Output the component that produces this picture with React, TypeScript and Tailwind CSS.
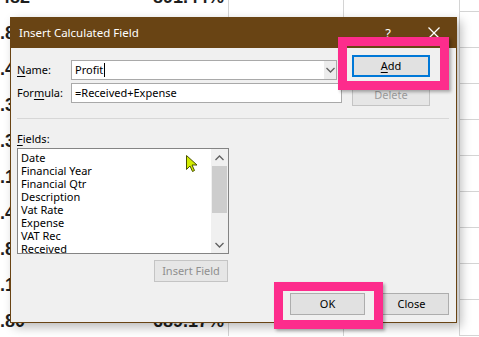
import React from "react";

const rows = [
  { a: "0.482", b: "891.44%", w: "w-[30px]" },
  { a: "0.83", b: "688.21%", w: "w-[25px]" },
  { a: "0.44", b: "790.12%", w: "w-[25px]" },
  { a: "0.35", b: "587.45%", w: "w-[25px]" },
  { a: "0.31", b: "686.92%", w: "w-[25px]" },
  { a: "1.17", b: "789.63%", w: "w-[25px]" },
  { a: "0.42", b: "891.08%", w: "w-[25px]" },
  { a: "0.84", b: "588.77%", w: "w-[25px]" },
  { a: "1.12", b: "690.55%", w: "w-[25px]" },
  { a: "0.80", b: "689.17%", w: "w-[25px]" },
];

const fields = [
  "Date",
  "Financial Year",
  "Financial Qtr",
  "Description",
  "Vat Rate",
  "Expense",
  "VAT Rec",
  "Received",
];

function Chevron({ up }: { up?: boolean }) {
  return (
    <svg width="9" height="6" viewBox="0 0 9 6" className="block">
      {up ? (
        <polyline points="0.5,5 4.5,1 8.5,5" fill="none" stroke="#606060" strokeWidth="1.3" />
      ) : (
        <polyline points="0.5,1 4.5,5 8.5,1" fill="none" stroke="#606060" strokeWidth="1.3" />
      )}
    </svg>
  );
}

export default function App() {
  return (
    <div className="relative w-[479px] h-[337px] overflow-hidden bg-white">
      {/* spreadsheet behind */}
      <div className="-mt-[24px] flex flex-col font-['Liberation_Sans',Arial,sans-serif] font-bold text-[18px] text-[#1e1e1e]">
        {rows.map((r, i) => (
          <div key={i} className="flex h-[36px]">
            <div className="w-[228px] flex items-end pb-[6px]">
              <div className={`${r.w} shrink-0 flex justify-end whitespace-nowrap leading-none`}>
                <span>{r.a}</span>
              </div>
              <div className="flex-1 flex justify-end pr-[4px] whitespace-nowrap leading-none">
                <span>{r.b}</span>
              </div>
            </div>
            <div className="w-[115px] border-l border-[#d4d4d4]" />
            <div className="w-[116px] border-l border-[#d4d4d4]" />
            <div className="flex-1 border-l border-b border-[#d4d4d4]" />
          </div>
        ))}
      </div>

      {/* dialog */}
      <div className="absolute left-[10px] top-[17px] w-[447px] h-[306px] flex flex-col bg-[#f0f0f0] border border-[#694414] shadow-[4px_4px_10px_rgba(0,0,0,0.28)] font-['Noto_Sans',sans-serif] text-[11px] text-black">
        <div className="h-[30px] shrink-0 bg-[#694414] flex items-center pl-[8px] text-white">
          <span className="text-[11.5px] leading-none">Insert Calculated Field</span>
          <span className="ml-auto mr-[37px] text-[13px] leading-none">?</span>
          <svg width="12" height="12" viewBox="0 0 12 12" className="mr-[16px]">
            <line x1="0.5" y1="0.5" x2="11.5" y2="11.5" stroke="white" strokeWidth="1.2" />
            <line x1="11.5" y1="0.5" x2="0.5" y2="11.5" stroke="white" strokeWidth="1.2" />
          </svg>
        </div>

        <div className="flex-1 flex flex-col">
          {/* top section */}
          <div className="flex">
            <div className="flex flex-col pt-[12px] gap-[3px] pl-[6px]">
              <div className="flex items-center h-[20px]">
                <span className="w-[54px]">
                  <span className="underline underline-offset-2">N</span>ame:
                </span>
                <div className="w-[266px] h-[20px] flex border border-[#a9a9a9] bg-white">
                  <div className="flex-1 flex items-center pl-[3px]">
                    <span>Profit</span>
                    <span className="w-px h-[14px] bg-black ml-[1px]" />
                  </div>
                  <div className="w-[12px] flex items-center justify-center bg-[#ececec]">
                    <Chevron />
                  </div>
                </div>
              </div>
              <div className="flex items-center h-[20px]">
                <span className="w-[54px]">
                  For<span className="underline underline-offset-2">m</span>ula:
                </span>
                <div className="w-[271px] h-[20px] flex items-center border border-[#a9a9a9] bg-white pl-[3px]">
                  =Received+Expense
                </div>
              </div>
            </div>
            <div className="ml-auto flex flex-col pt-[7px] gap-[7px] pr-[26px]">
              <button className="w-[78px] h-[22px] bg-[#e1e1e1] border-2 border-[#0078d7] flex items-center justify-center">
                <span>
                  <span className="underline underline-offset-2">A</span>dd
                </span>
              </button>
              <button className="w-[78px] h-[22px] bg-[#e6e6e6] border border-[#c4c4c4] text-[#9c9c9c] flex items-center justify-center">
                Delete
              </button>
            </div>
          </div>

          <div className="mt-[12px] ml-[6px] mr-[7px] h-px bg-[#d7d7d7]" />

          <div className="mt-[12px] ml-[6px] leading-[16px]">
            <span className="underline underline-offset-2">F</span>ields:
          </div>

          <div className="ml-[6px] mt-[1px] w-[212px] flex flex-col items-end">
            <div className="w-[212px] h-[106px] flex border border-[#848484] bg-white">
              <div className="flex-1 flex flex-col pl-[3px] pt-[2px] leading-[13px] overflow-hidden">
                {fields.map((f) => (
                  <div key={f} className="h-[13px] whitespace-nowrap">{f}</div>
                ))}
              </div>
              <div className="w-[17px] flex flex-col bg-[#f0f0f0]">
                <div className="h-[17px] flex items-center justify-center">
                  <Chevron up />
                </div>
                <div className="h-[47px] mx-[1px] bg-[#cdcdcd]" />
                <div className="flex-1" />
                <div className="h-[17px] flex items-center justify-center">
                  <Chevron />
                </div>
              </div>
            </div>
            <button className="mt-[6px] mr-[1px] w-[74px] h-[22px] bg-[#e6e6e6] border border-[#c4c4c4] text-[#8f8f8f] flex items-center justify-center">
              Insert Field
            </button>
          </div>

          <div className="mt-auto flex justify-end gap-[9px] pr-[7px] pb-[7px]">
            <button className="w-[75px] h-[22px] bg-[#e1e1e1] border border-[#adadad] flex items-center justify-center">
              OK
            </button>
            <button className="w-[75px] h-[22px] bg-[#e1e1e1] border border-[#adadad] flex items-center justify-center">
              Close
            </button>
          </div>
        </div>
      </div>

      {/* pink annotation boxes */}
      <div className="absolute left-[338px] top-[37px] w-[111px] h-[53px] border-[9px] border-[#fd2c8c] shadow-[2px_2px_3px_rgba(0,0,0,0.3)]" />
      <div className="absolute left-[274px] top-[282px] w-[109px] h-[47px] border-[9px] border-[#fd2c8c] shadow-[2px_2px_3px_rgba(0,0,0,0.3)]" />

      {/* mouse cursor */}
      <svg className="absolute left-[186px] top-[155px]" width="13" height="18" viewBox="0 0 13 18">
        <path d="M0.5,0.5 L0.5,14.5 L4,11 L6.5,16.5 L8.5,15.5 L6,10 L11,10 Z" fill="#d2ec00" stroke="#4a5200" strokeWidth="1" strokeLinejoin="round" />
      </svg>
    </div>
  );
}
